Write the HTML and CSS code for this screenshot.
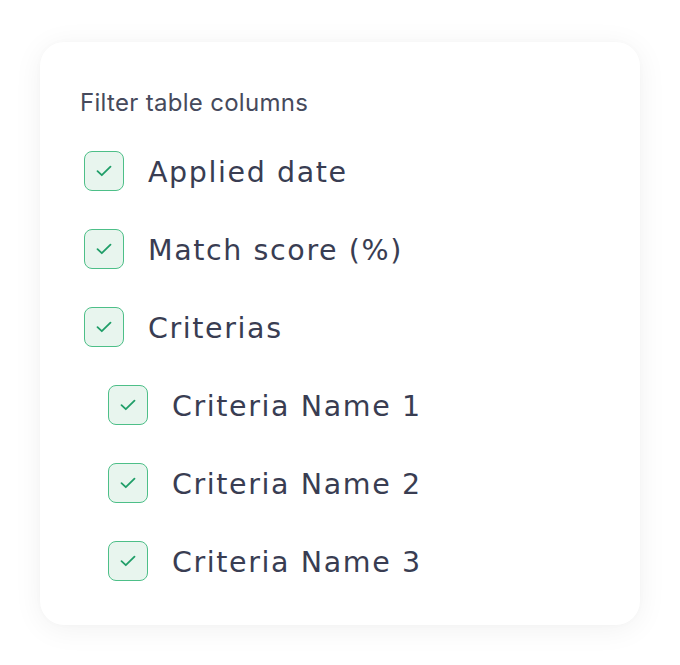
FILE: index.html
```html
<!DOCTYPE html>
<html>
<head>
<meta charset="utf-8">
<link rel="stylesheet" href="styles.css">
</head>
<body>
<div class="card">
  <div class="title">Filter table columns</div>
  <ul class="list">
    <li class="item"><span class="box"><svg viewBox="0 0 16 12" width="16" height="12"><path d="M1.5 6.2 L5.8 10.2 L14.5 1.6" fill="none" stroke="#1f9e68" stroke-width="1.8" stroke-linecap="round" stroke-linejoin="round"/></svg></span><span class="label">Applied date</span></li>
    <li class="item"><span class="box"><svg viewBox="0 0 16 12" width="16" height="12"><path d="M1.5 6.2 L5.8 10.2 L14.5 1.6" fill="none" stroke="#1f9e68" stroke-width="1.8" stroke-linecap="round" stroke-linejoin="round"/></svg></span><span class="label">Match score (%)</span></li>
    <li class="item"><span class="box"><svg viewBox="0 0 16 12" width="16" height="12"><path d="M1.5 6.2 L5.8 10.2 L14.5 1.6" fill="none" stroke="#1f9e68" stroke-width="1.8" stroke-linecap="round" stroke-linejoin="round"/></svg></span><span class="label">Criterias</span></li>
    <li class="item sub"><span class="box"><svg viewBox="0 0 16 12" width="16" height="12"><path d="M1.5 6.2 L5.8 10.2 L14.5 1.6" fill="none" stroke="#1f9e68" stroke-width="1.8" stroke-linecap="round" stroke-linejoin="round"/></svg></span><span class="label">Criteria Name 1</span></li>
    <li class="item sub"><span class="box"><svg viewBox="0 0 16 12" width="16" height="12"><path d="M1.5 6.2 L5.8 10.2 L14.5 1.6" fill="none" stroke="#1f9e68" stroke-width="1.8" stroke-linecap="round" stroke-linejoin="round"/></svg></span><span class="label">Criteria Name 2</span></li>
    <li class="item sub"><span class="box"><svg viewBox="0 0 16 12" width="16" height="12"><path d="M1.5 6.2 L5.8 10.2 L14.5 1.6" fill="none" stroke="#1f9e68" stroke-width="1.8" stroke-linecap="round" stroke-linejoin="round"/></svg></span><span class="label">Criteria Name 3</span></li>
  </ul>
</div>
</body>
</html>
```
FILE: styles.css
```css
* { box-sizing: border-box; }
html, body { margin: 0; padding: 0; background: #ffffff; }
body { padding: 42px 40px 40px 40px; font-family: "DejaVu Sans", "Open Sans", sans-serif; }
.card {
  width: 600px;
  height: 583px;
  background: #ffffff;
  border-radius: 24px;
  box-shadow: 0 4px 30px rgba(0, 0, 0, 0.06), 0 0 6px rgba(0,0,0,0.02);
  padding: 49px 40px 44px 40px;
}
.title {
  font-family: Inter, Roboto, "Liberation Sans", sans-serif;
  font-size: 24px;
  line-height: 24px;
  color: #464a5c;
  height: 24px;
  letter-spacing: 0.3px;
}
.list {
  list-style: none;
  margin: 36px 0 0 4px;
  padding: 0;
  display: flex;
  flex-direction: column;
  gap: 38px;
}
.item {
  display: flex;
  align-items: center;
  height: 40px;
  gap: 24px;
}
.item.sub { padding-left: 24px; }
.box {
  width: 40px;
  height: 40px;
  border: 1.5px solid #4dbf88;
  background: #e8f5ee;
  border-radius: 8px;
  display: flex;
  align-items: center;
  justify-content: center;
  flex: none;
}
.box svg { display: block; }
.label {
  font-size: 28.5px;
  line-height: 40px;
  padding-top: 3px;
  color: #393d52;
  letter-spacing: 1.6px;
}
```
